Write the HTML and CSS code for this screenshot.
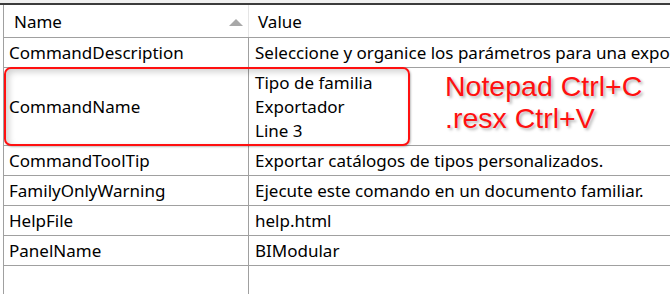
FILE: index.html
```html
<!DOCTYPE html>
<html>
<head>
<meta charset="utf-8">
<link rel="stylesheet" href="styles.css">
</head>
<body>
<div class="topbar"></div>
<div class="grid">
  <div class="row head">
    <div class="cell name">Name<span class="sort"></span></div>
    <div class="cell value">Value</div>
  </div>
  <div class="row">
    <div class="cell name">CommandDescription</div>
    <div class="cell value">Seleccione y organice los parámetros para una exportación.</div>
  </div>
  <div class="row tall">
    <div class="cell name">CommandName</div>
    <div class="cell value multi"><span>Tipo de familia</span><span>Exportador</span><span>Line 3</span></div>
  </div>
  <div class="row">
    <div class="cell name">CommandToolTip</div>
    <div class="cell value">Exportar catálogos de tipos personalizados.</div>
  </div>
  <div class="row">
    <div class="cell name">FamilyOnlyWarning</div>
    <div class="cell value">Ejecute este comando en un documento familiar.</div>
  </div>
  <div class="row">
    <div class="cell name">HelpFile</div>
    <div class="cell value">help.html</div>
  </div>
  <div class="row">
    <div class="cell name">PanelName</div>
    <div class="cell value">BIModular</div>
  </div>
  <div class="row filler">
    <div class="cell name"></div>
    <div class="cell value"></div>
  </div>
  <div class="highlight"></div>
  <div class="note">Notepad Ctrl+C<br>.resx Ctrl+V</div>
</div>
</body>
</html>
```
FILE: styles.css
```css
html, body {
  margin: 0;
  padding: 0;
  background: #fff;
  overflow: hidden;
  width: 670px;
  height: 294px;
}
body {
  font-family: "Noto Sans", "Open Sans", sans-serif;
  font-size: 17px;
  color: #000;
}
.topbar {
  height: 3px;
  background: #f0f0f0;
  border-bottom: 2px solid #3c3c3c;
}
.grid {
  position: relative;
  margin-left: 3px;
  border-left: 1px solid #a0a0a0;
  width: 667px;
  overflow: hidden;
}
.row {
  display: grid;
  grid-template-columns: 245px 1fr;
  height: 30px;
  box-sizing: border-box;
  border-bottom: 1px solid #a0a0a0;
}
.row.head {
  height: 33px;
}
.row.tall {
  height: 78px;
}
.row.filler {
  height: 40px;
  border-bottom: none;
}
.cell {
  display: flex;
  align-items: center;
  white-space: nowrap;
  overflow: hidden;
}
.cell.name {
  border-right: 1px solid #a0a0a0;
  padding-left: 5px;
  position: relative;
}
.cell.value {
  padding-left: 6px;
}
.head .cell.name {
  border-right-color: #e5e5e5;
  padding-left: 10px;
}
.head .cell.value {
  padding-left: 9px;
}
.sort {
  position: absolute;
  left: 225px;
  top: 14px;
  width: 0;
  height: 0;
  border-left: 7px solid transparent;
  border-right: 7px solid transparent;
  border-bottom: 7px solid #a8a8a8;
}
.multi {
  flex-direction: column;
  align-items: flex-start;
  justify-content: center;
}
.multi span {
  line-height: 24px;
}
.highlight {
  position: absolute;
  left: 0;
  top: 62px;
  width: 406px;
  height: 79px;
  box-sizing: border-box;
  border: 2px solid #ff1010;
  border-radius: 7px;
  box-shadow: inset 3px 3px 6px rgba(0,0,0,0.18), 1px 1px 2px rgba(0,0,0,0.25);
}
.note {
  position: absolute;
  left: 441px;
  top: 65px;
  font-family: "Liberation Sans", Arial, sans-serif;
  font-size: 28.5px;
  line-height: 32px;
  color: #ff1010;
  text-shadow: 2px 2px 3px rgba(0,0,0,0.3);
}
```
